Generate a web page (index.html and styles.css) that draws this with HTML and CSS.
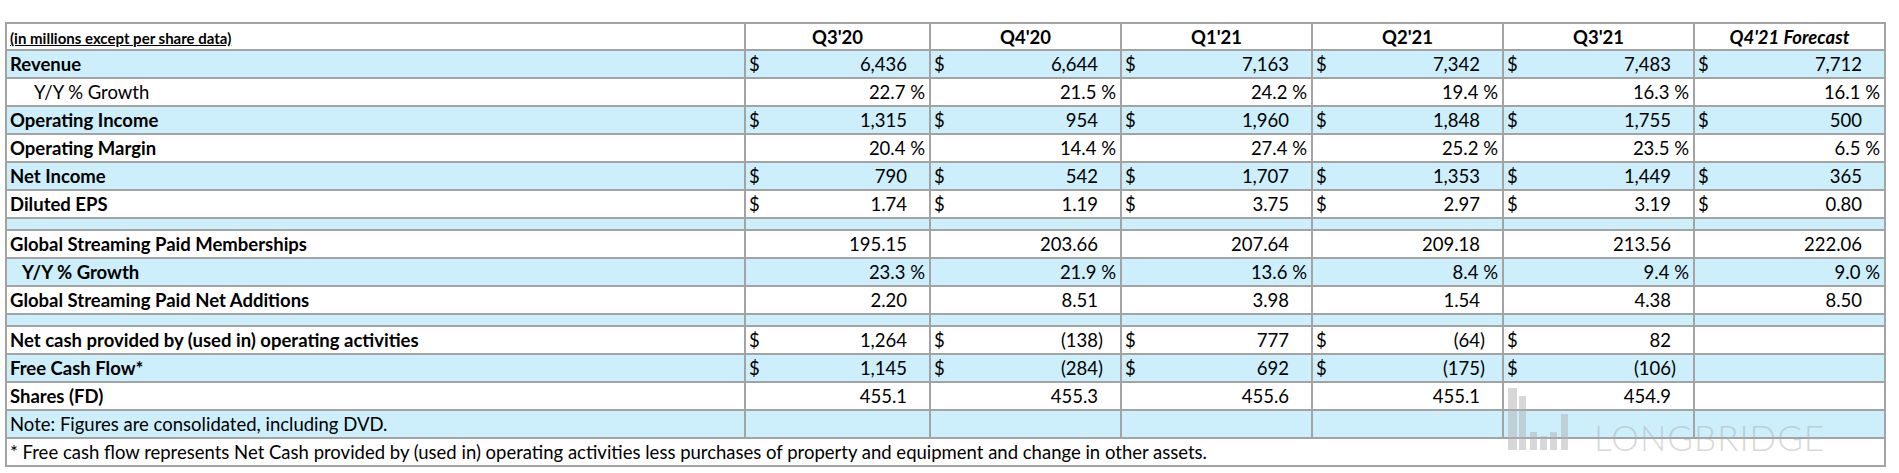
FILE: index.html
```html
<!DOCTYPE html>
<html>
<head>
<meta charset="utf-8">
<link rel="stylesheet" href="styles.css">
</head>
<body>
<div class="page">
<table class="fin">
  <colgroup>
    <col class="c-label"><col class="c-q1"><col class="c-q"><col class="c-q"><col class="c-q"><col class="c-q"><col class="c-q">
  </colgroup>
  <tr class="head">
    <td class="units"><span>(in millions except per share data)</span></td>
    <td>Q3'20</td><td>Q4'20</td><td>Q1'21</td><td>Q2'21</td><td>Q3'21</td><td class="fc">Q4'21 Forecast</td>
  </tr>
  <tr class="blue">
    <td class="lbl b">Revenue</td>
    <td class="n"><span class="cur">$</span>6,436</td>
    <td class="n"><span class="cur">$</span>6,644</td>
    <td class="n"><span class="cur">$</span>7,163</td>
    <td class="n"><span class="cur">$</span>7,342</td>
    <td class="n"><span class="cur">$</span>7,483</td>
    <td class="n"><span class="cur">$</span>7,712</td>
  </tr>
  <tr>
    <td class="lbl ind1">Y/Y % Growth</td>
    <td class="p">22.7 %</td><td class="p">21.5 %</td><td class="p">24.2 %</td><td class="p">19.4 %</td><td class="p">16.3 %</td><td class="p">16.1 %</td>
  </tr>
  <tr class="blue">
    <td class="lbl b">Operating Income</td>
    <td class="n"><span class="cur">$</span>1,315</td>
    <td class="n"><span class="cur">$</span>954</td>
    <td class="n"><span class="cur">$</span>1,960</td>
    <td class="n"><span class="cur">$</span>1,848</td>
    <td class="n"><span class="cur">$</span>1,755</td>
    <td class="n"><span class="cur">$</span>500</td>
  </tr>
  <tr>
    <td class="lbl b">Operating Margin</td>
    <td class="p">20.4 %</td><td class="p">14.4 %</td><td class="p">27.4 %</td><td class="p">25.2 %</td><td class="p">23.5 %</td><td class="p">6.5 %</td>
  </tr>
  <tr class="blue">
    <td class="lbl b">Net Income</td>
    <td class="n"><span class="cur">$</span>790</td>
    <td class="n"><span class="cur">$</span>542</td>
    <td class="n"><span class="cur">$</span>1,707</td>
    <td class="n"><span class="cur">$</span>1,353</td>
    <td class="n"><span class="cur">$</span>1,449</td>
    <td class="n"><span class="cur">$</span>365</td>
  </tr>
  <tr>
    <td class="lbl b">Diluted EPS</td>
    <td class="n"><span class="cur">$</span>1.74</td>
    <td class="n"><span class="cur">$</span>1.19</td>
    <td class="n"><span class="cur">$</span>3.75</td>
    <td class="n"><span class="cur">$</span>2.97</td>
    <td class="n"><span class="cur">$</span>3.19</td>
    <td class="n"><span class="cur">$</span>0.80</td>
  </tr>
  <tr class="blue spacer"><td></td><td></td><td></td><td></td><td></td><td></td><td></td></tr>
  <tr>
    <td class="lbl b">Global Streaming Paid Memberships</td>
    <td class="n">195.15</td><td class="n">203.66</td><td class="n">207.64</td><td class="n">209.18</td><td class="n">213.56</td><td class="n">222.06</td>
  </tr>
  <tr class="blue">
    <td class="lbl b ind2">Y/Y % Growth</td>
    <td class="p">23.3 %</td><td class="p">21.9 %</td><td class="p">13.6 %</td><td class="p">8.4 %</td><td class="p">9.4 %</td><td class="p">9.0 %</td>
  </tr>
  <tr>
    <td class="lbl b">Global Streaming Paid Net Additions</td>
    <td class="n">2.20</td><td class="n">8.51</td><td class="n">3.98</td><td class="n">1.54</td><td class="n">4.38</td><td class="n">8.50</td>
  </tr>
  <tr class="blue spacer"><td></td><td></td><td></td><td></td><td></td><td></td><td></td></tr>
  <tr>
    <td class="lbl b">Net cash provided by (used in) operating activities</td>
    <td class="n"><span class="cur">$</span>1,264</td>
    <td class="n neg"><span class="cur">$</span>(138)</td>
    <td class="n"><span class="cur">$</span>777</td>
    <td class="n neg"><span class="cur">$</span>(64)</td>
    <td class="n"><span class="cur">$</span>82</td>
    <td></td>
  </tr>
  <tr class="blue">
    <td class="lbl b">Free Cash Flow*</td>
    <td class="n"><span class="cur">$</span>1,145</td>
    <td class="n neg"><span class="cur">$</span>(284)</td>
    <td class="n"><span class="cur">$</span>692</td>
    <td class="n neg"><span class="cur">$</span>(175)</td>
    <td class="n neg"><span class="cur">$</span>(106)</td>
    <td></td>
  </tr>
  <tr>
    <td class="lbl b">Shares (FD)</td>
    <td class="n">455.1</td><td class="n">455.3</td><td class="n">455.6</td><td class="n">455.1</td><td class="n">454.9</td><td></td>
  </tr>
  <tr class="blue">
    <td class="lbl">Note: Figures are consolidated, including DVD.</td>
    <td></td><td></td><td></td><td></td><td></td><td></td>
  </tr>
  <tr>
    <td class="lbl foot" colspan="7">* Free cash flow represents Net Cash provided by (used in) operating activities less purchases of property and equipment and change in other assets.</td>
  </tr>
</table>
<div class="watermark" aria-hidden="true">
  <svg class="wm-logo" width="72" height="62" viewBox="0 0 72 62">
    <rect x="0" y="0" width="9" height="62"/>
    <rect x="11" y="8" width="7" height="54"/>
    <rect x="22" y="44" width="7" height="18"/>
    <rect x="32" y="48" width="7" height="14"/>
    <rect x="42" y="44" width="7" height="18"/>
    <rect x="53" y="26" width="7" height="36"/>
  </svg>
  <span class="wm-text">LONGBRIDGE</span>
</div>
</div>
</body>
</html>
```
FILE: styles.css
```css
html, body {
  margin: 0;
  padding: 0;
  background: #ffffff;
}
.page {
  position: relative;
  padding: 22px 0 0 5px;
  font-family: Lato, "Open Sans", "Liberation Sans", sans-serif;
  color: #000;
}
.fin {
  border-collapse: separate;
  border-spacing: 0;
  table-layout: fixed;
  width: 1881px;
  border-top: 2px solid #a3a3a3;
  border-left: 2px solid #a3a3a3;
  font-size: 18.5px;
}
.c-label { width: 739px; }
.c-q1 { width: 185px; }
.c-q { width: 191px; }
.fin td {
  border-right: 2px solid #a3a3a3;
  border-bottom: 2px solid #a3a3a3;
  padding: 0 3px;
  box-sizing: border-box;
  white-space: nowrap;
  overflow: hidden;
  vertical-align: middle;
  line-height: 22px;
}
.fin tr td { height: 28px; }
.fin tr.head td {
  height: 27px;
  text-align: center;
  font-weight: 700;
  vertical-align: bottom;
  padding-bottom: 1px;
}
.fin tr.head td.fc { font-style: italic; }
.fin tr.head td.units {
  text-align: left;
  font-size: 15px;
  padding-bottom: 0;
}
.units span { text-decoration: underline; }
.fin tr.blue td { background: #cdeefb; }
.fin tr.spacer td { height: 12px; line-height: 0; }
.lbl { text-align: left; }
.b { font-weight: 700; }
.ind1 { padding-left: 27px !important; }
.ind2 { padding-left: 15px !important; }
.n { text-align: right; padding-right: 22px !important; }
.n.neg { padding-right: 17px !important; }
.p { text-align: right; padding-right: 4px !important; }
.cur { float: left; }
.watermark {
  position: absolute;
  left: 1508px;
  top: 388px;
  display: flex;
  align-items: flex-end;
  gap: 14px;
  color: rgba(175, 175, 175, 0.5);
  fill: rgba(175, 175, 175, 0.5);
  pointer-events: none;
}
.wm-text {
  font-family: Lato, "Liberation Sans", sans-serif;
  font-size: 35px;
  letter-spacing: 1px;
  line-height: 26px;
  font-weight: 300;
}
```
